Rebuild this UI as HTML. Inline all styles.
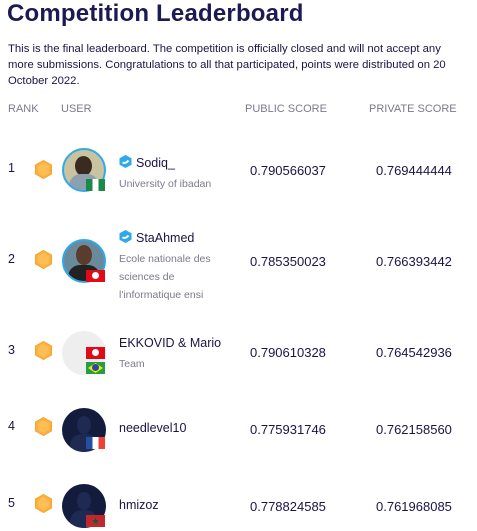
<!DOCTYPE html>
<html><head><meta charset="utf-8"><style>
body{margin:0;background:#fff;font-family:"Liberation Sans",sans-serif;color:#1a1446;width:477px;height:531px;overflow:hidden;position:relative}
.a{position:absolute;white-space:nowrap}
h1{position:absolute;left:7px;top:0px;margin:0;font-size:24px;line-height:28px;font-weight:bold;color:#1b1a52;letter-spacing:0.2px}
.p{left:8px;top:41px;font-size:11.3px;line-height:16px;color:#1a1446;white-space:normal;width:445px}
.hd{top:103px;font-size:11px;color:#7a7a8e}
.rk{font-size:12.5px;left:8px}
.sc{font-size:13px;color:#1a1446}
.nm{font-size:12.5px;left:119px;color:#1a1446}
.sub{font-size:10.5px;left:119px;color:#7a7a8e;line-height:18px;white-space:normal;width:105px}
.av{position:absolute;width:44px;height:44px;border-radius:50%;left:62px}
.hex{position:absolute;left:35px;width:17px;height:19px}
.fl{position:absolute;width:19px;height:12px;left:86px}
.vb{display:inline-block;width:13px;height:13px;vertical-align:-1px;margin-right:4px}
</style></head><body>
<h1>Competition Leaderboard</h1>
<div class="a p">This is the final leaderboard. The competition is officially closed and will not accept any<br>more submissions. Congratulations to all that participated, points were distributed on 20<br>October 2022.</div>
<div class="a hd" style="left:8px">RANK</div>
<div class="a hd" style="left:61px">USER</div>
<div class="a hd" style="left:245px">PUBLIC SCORE</div>
<div class="a hd" style="left:369px">PRIVATE SCORE</div>

<svg width="0" height="0" style="position:absolute"><defs>
<symbol id="hx" viewBox="0 0 17 19"><polygon points="8.5,0.5 16.5,5 16.5,14 8.5,18.5 0.5,14 0.5,5" fill="#fbb040" stroke="#f7a52a" stroke-width="1"/><polygon points="8.5,3 14,6.2 14,12.8 8.5,16 3,12.8 3,6.2" fill="#fdbf55"/></symbol>
<symbol id="vf" viewBox="0 0 13 13"><polygon points="6.5,0 12.5,3.3 12.5,9.7 6.5,13 0.5,9.7 0.5,3.3" fill="#2fa9e8"/><path d="M3.5 7.5 Q6.5 9 9.5 5.5" stroke="#fff" stroke-width="2" fill="none"/></symbol>
</defs></svg>

<!-- row 1 -->
<div class="a rk" style="top:161px">1</div>
<svg class="hex" style="top:160px"><use href="#hx"/></svg>
<div class="av" style="top:148px;background:#c9c3a0;border:2px solid #2fa9e8;width:40px;height:40px;overflow:hidden"><div style="position:absolute;left:11px;top:6px;width:17px;height:20px;border-radius:50%;background:#3a2a20"></div><div style="position:absolute;left:5px;top:24px;width:30px;height:16px;border-radius:12px 12px 0 0;background:#8ea0b0"></div></div>
<div class="fl" style="top:179px;background:linear-gradient(90deg,#1a8a4a 33%,#fff 33%,#fff 67%,#1a8a4a 67%)"></div>
<div class="a nm" style="top:155px"><svg class="vb"><use href="#vf"/></svg>Sodiq_</div>
<div class="a sub" style="top:175px">University of ibadan</div>
<div class="a sc" style="left:250px;top:163px">0.790566037</div>
<div class="a sc" style="left:376px;top:163px">0.769444444</div>

<!-- row 2 -->
<div class="a rk" style="top:252px">2</div>
<svg class="hex" style="top:250px"><use href="#hx"/></svg>
<div class="av" style="top:239px;background:#6a8a9c;border:2px solid #2fa9e8;width:40px;height:40px;overflow:hidden"><div style="position:absolute;left:12px;top:4px;width:16px;height:20px;border-radius:50%;background:#5a3c2c"></div><div style="position:absolute;left:4px;top:24px;width:32px;height:18px;border-radius:12px 12px 0 0;background:#222"></div></div>
<div class="fl" style="top:270px;background:#e30a17"><div style="position:absolute;left:6px;top:2px;width:7px;height:7px;border-radius:50%;background:#fff"></div></div>
<div class="a nm" style="top:230px"><svg class="vb"><use href="#vf"/></svg>StaAhmed</div>
<div class="a sub" style="top:250px">Ecole nationale des sciences de l'informatique ensi</div>
<div class="a sc" style="left:250px;top:254px">0.785350023</div>
<div class="a sc" style="left:376px;top:254px">0.766393442</div>

<!-- row 3 -->
<div class="a rk" style="top:343px">3</div>
<svg class="hex" style="top:341px"><use href="#hx"/></svg>
<div class="av" style="top:331px;background:#eee"></div>
<div class="fl" style="top:347px;background:#e30a17"><div style="position:absolute;left:6px;top:2px;width:7px;height:7px;border-radius:50%;background:#fff"></div></div>
<div class="fl" style="top:362px;background:#229e45"><div style="position:absolute;left:2px;top:1px;width:15px;height:10px;background:#f8e509;clip-path:polygon(50% 0,100% 50%,50% 100%,0 50%)"></div><div style="position:absolute;left:6px;top:2px;width:7px;height:7px;border-radius:50%;background:#2b49a3"></div></div>
<div class="a nm" style="top:336px">EKKOVID &amp; Mario</div>
<div class="a sub" style="top:355px">Team</div>
<div class="a sc" style="left:250px;top:345px">0.790610328</div>
<div class="a sc" style="left:376px;top:345px">0.764542936</div>

<!-- row 4 -->
<div class="a rk" style="top:419px">4</div>
<svg class="hex" style="top:417px"><use href="#hx"/></svg>
<div class="av" style="top:408px;background:#141c3e;overflow:hidden"><div style="position:absolute;left:15px;top:8px;width:14px;height:18px;border-radius:50%;background:#1f2a52"></div><div style="position:absolute;left:8px;top:26px;width:28px;height:20px;border-radius:12px 12px 0 0;background:#1f2a52"></div></div>
<div class="fl" style="top:437px;background:linear-gradient(90deg,#2450a4 33%,#fff 33%,#fff 67%,#ef4135 67%)"></div>
<div class="a nm" style="top:421px">needlevel10</div>
<div class="a sc" style="left:250px;top:422px">0.775931746</div>
<div class="a sc" style="left:376px;top:422px">0.762158560</div>

<!-- row 5 -->
<div class="a rk" style="top:496px">5</div>
<svg class="hex" style="top:494px"><use href="#hx"/></svg>
<div class="av" style="top:484px;background:#141c3e;overflow:hidden"><div style="position:absolute;left:15px;top:8px;width:14px;height:18px;border-radius:50%;background:#1f2a52"></div><div style="position:absolute;left:8px;top:26px;width:28px;height:20px;border-radius:12px 12px 0 0;background:#1f2a52"></div></div>
<div class="fl" style="top:515px;background:#c1272d;color:#006233;font-size:9px;text-align:center;line-height:12px">★</div>
<div class="a nm" style="top:498px">hmizoz</div>
<div class="a sc" style="left:250px;top:499px">0.778824585</div>
<div class="a sc" style="left:376px;top:499px">0.761968085</div>
</body></html>
